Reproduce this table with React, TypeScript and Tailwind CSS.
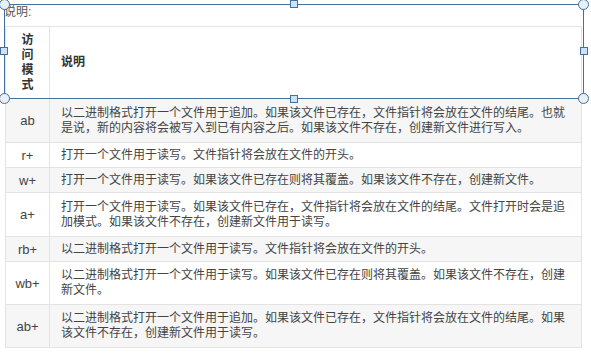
import React from 'react';

type Row = { mode: string; desc: string; h: string; shaded: boolean };

const rows: Row[] = [
  { mode: 'ab', desc: '以二进制格式打开一个文件用于追加。如果该文件已存在，文件指针将会放在文件的结尾。也就是说，新的内容将会被写入到已有内容之后。如果该文件不存在，创建新文件进行写入。', h: 'h-[44px]', shaded: true },
  { mode: 'r+', desc: '打开一个文件用于读写。文件指针将会放在文件的开头。', h: 'h-[25px]', shaded: false },
  { mode: 'w+', desc: '打开一个文件用于读写。如果该文件已存在则将其覆盖。如果该文件不存在，创建新文件。', h: 'h-[25px]', shaded: true },
  { mode: 'a+', desc: '打开一个文件用于读写。如果该文件已存在，文件指针将会放在文件的结尾。文件打开时会是追加模式。如果该文件不存在，创建新文件用于读写。', h: 'h-[44px]', shaded: false },
  { mode: 'rb+', desc: '以二进制格式打开一个文件用于读写。文件指针将会放在文件的开头。', h: 'h-[25px]', shaded: true },
  { mode: 'wb+', desc: '以二进制格式打开一个文件用于读写。如果该文件已存在则将其覆盖。如果该文件不存在，创建新文件。', h: 'h-[43px]', shaded: false },
  { mode: 'ab+', desc: '以二进制格式打开一个文件用于追加。如果该文件已存在，文件指针将会放在文件的结尾。如果该文件不存在，创建新文件用于读写。', h: 'h-[43px]', shaded: true },
];

const Handle: React.FC<{ className: string; round?: boolean }> = ({ className, round }) => (
  <div
    className={
      round
        ? `absolute w-[11px] h-[11px] rounded-full border border-[#41719c] bg-[#e9f1f8] ${className}`
        : `absolute w-[8px] h-[8px] border border-[#41719c] bg-[#cfe2f3] ${className}`
    }
  />
);

const App: React.FC = () => {
  return (
    <div className="relative w-[591px] h-[357px] bg-white overflow-hidden font-['Liberation_Sans','Noto_Sans_CJK_SC',sans-serif] text-[#444]">
      <div className="pl-[4px] pt-[4px] text-[12px] leading-[16px] text-[#555]">说明:</div>

      <table className="ml-[5px] mt-[6px] w-[577px] border-collapse table-fixed text-[12px] leading-[15px]">
        <colgroup>
          <col className="w-[44px]" />
          <col />
        </colgroup>
        <thead>
          <tr className="h-[72px] bg-white">
            <th className="border border-[#e3e3e3] align-middle font-bold text-[#333]">
              <div className="flex flex-col items-center text-[12px] leading-[15px]">
                <span className="block h-[15px]">访</span>
                <span className="block h-[15px]">问</span>
                <span className="block h-[15px]">模</span>
                <span className="block h-[15px]">式</span>
              </div>
            </th>
            <th className="border border-[#e3e3e3] pl-[11px] text-left align-middle font-bold text-[#333]">说明</th>
          </tr>
        </thead>
        <tbody>
          {rows.map((r) => (
            <tr key={r.mode} className={`${r.h} ${r.shaded ? 'bg-[#f6f6f6]' : 'bg-white'}`}>
              <td className="border border-[#e3e3e3] text-center align-middle text-[13px]">{r.mode}</td>
              <td className="border border-[#e3e3e3] pl-[11px] pr-[10px] align-middle">{r.desc}</td>
            </tr>
          ))}
        </tbody>
      </table>

      {/* selection frame over the header */}
      <div className="absolute left-[4px] top-[4px] w-[580px] h-[95px] border-[1.5px] border-[#41719c] pointer-events-none">
        <Handle round className="-left-[6px] -top-[6px]" />
        <Handle round className="-right-[6px] -top-[6px]" />
        <Handle round className="-left-[6px] -bottom-[6px]" />
        <Handle round className="-right-[6px] -bottom-[6px]" />
        <Handle className="left-[285px] -top-[5px]" />
        <Handle className="left-[285px] -bottom-[5px]" />
        <Handle className="-left-[5px] top-[42px]" />
        <Handle className="-right-[5px] top-[42px]" />
      </div>
    </div>
  );
};

export default App;
